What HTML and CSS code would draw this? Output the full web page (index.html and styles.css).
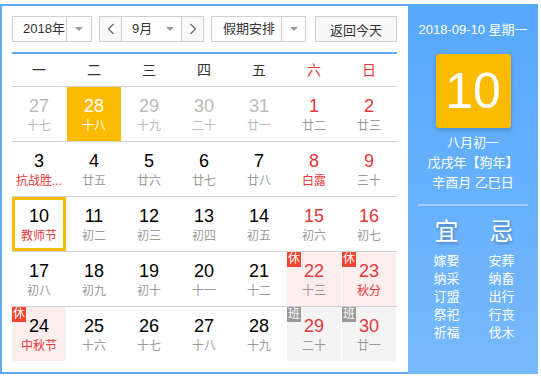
FILE: index.html
```html
<!DOCTYPE html>
<html lang="zh-CN">
<head>
<meta charset="utf-8">
<title>万年历</title>
<link rel="stylesheet" href="styles.css">
</head>
<body>
<div class="cal">
  <div class="main">
    <div class="toolbar">
      <div class="sel sel-year">
        <span class="sel-text">2018年</span>
        <span class="sel-arrow"><i class="tri"></i></span>
      </div>
      <div class="sel sel-month">
        <span class="nav"><svg width="8" height="12" viewBox="0 0 8 12"><polyline points="6.5,1 1.5,6 6.5,11" fill="none" stroke="#666" stroke-width="1.2"/></svg></span>
        <span class="month-mid"><span class="sel-text">9月</span><i class="tri"></i></span>
        <span class="nav nav-r"><svg width="8" height="12" viewBox="0 0 8 12"><polyline points="1.5,1 6.5,6 1.5,11" fill="none" stroke="#666" stroke-width="1.2"/></svg></span>
      </div>
      <div class="sel sel-holiday">
        <span class="sel-text">假期安排</span>
        <span class="sel-arrow"><i class="tri"></i></span>
      </div>
      <button class="today">返回今天</button>
    </div>
    <div class="head">
      <span>一</span><span>二</span><span>三</span><span>四</span><span>五</span><span class="red">六</span><span class="red">日</span>
    </div>
    <div class="week">
      <div class="day other"><b>27</b><em>十七</em></div>
      <div class="day cur"><b>28</b><em>十八</em></div>
      <div class="day other"><b>29</b><em>十九</em></div>
      <div class="day other"><b>30</b><em>二十</em></div>
      <div class="day other"><b>31</b><em>廿一</em></div>
      <div class="day wkend"><b>1</b><em>廿二</em></div>
      <div class="day wkend"><b>2</b><em>廿三</em></div>
    </div>
    <div class="week">
      <div class="day fest"><b>3</b><em>抗战胜...</em></div>
      <div class="day"><b>4</b><em>廿五</em></div>
      <div class="day"><b>5</b><em>廿六</em></div>
      <div class="day"><b>6</b><em>廿七</em></div>
      <div class="day"><b>7</b><em>廿八</em></div>
      <div class="day wkend fest"><b>8</b><em>白露</em></div>
      <div class="day wkend"><b>9</b><em>三十</em></div>
    </div>
    <div class="week">
      <div class="day picked fest"><b>10</b><em>教师节</em></div>
      <div class="day"><b>11</b><em>初二</em></div>
      <div class="day"><b>12</b><em>初三</em></div>
      <div class="day"><b>13</b><em>初四</em></div>
      <div class="day"><b>14</b><em>初五</em></div>
      <div class="day wkend"><b>15</b><em>初六</em></div>
      <div class="day wkend"><b>16</b><em>初七</em></div>
    </div>
    <div class="week">
      <div class="day"><b>17</b><em>初八</em></div>
      <div class="day"><b>18</b><em>初九</em></div>
      <div class="day"><b>19</b><em>初十</em></div>
      <div class="day"><b>20</b><em>十一</em></div>
      <div class="day"><b>21</b><em>十二</em></div>
      <div class="day wkend rest"><span class="badge">休</span><b>22</b><em>十三</em></div>
      <div class="day wkend rest fest"><span class="badge">休</span><b>23</b><em>秋分</em></div>
    </div>
    <div class="week">
      <div class="day rest fest"><span class="badge">休</span><b>24</b><em>中秋节</em></div>
      <div class="day"><b>25</b><em>十六</em></div>
      <div class="day"><b>26</b><em>十七</em></div>
      <div class="day"><b>27</b><em>十八</em></div>
      <div class="day"><b>28</b><em>十九</em></div>
      <div class="day wkend work"><span class="badge">班</span><b>29</b><em>二十</em></div>
      <div class="day wkend work"><span class="badge">班</span><b>30</b><em>廿一</em></div>
    </div>
  </div>
  <div class="side">
    <div class="side-date">2018-09-10 星期一</div>
    <div class="big-day">10</div>
    <div class="lunar">
      <div>八月初一</div>
      <div>戊戌年【狗年】</div>
      <div>辛酉月 乙巳日</div>
    </div>
    <div class="divider"></div>
    <div class="yiji">
      <div class="yj-col">
        <div class="yj-title">宜</div>
        <div>嫁娶</div><div>纳采</div><div>订盟</div><div>祭祀</div><div>祈福</div>
      </div>
      <div class="yj-col">
        <div class="yj-title">忌</div>
        <div>安葬</div><div>纳畜</div><div>出行</div><div>行丧</div><div>伐木</div>
      </div>
    </div>
  </div>
</div>
</body>
</html>
```

FILE: styles.css
```css
* { box-sizing: border-box; }
html, body { margin: 0; padding: 0; background: #fff; }
body {
  font-family: "Liberation Sans", "Noto Sans CJK SC", Arial, sans-serif;
  color: #333;
}
.cal {
  display: flex;
  margin-top: 4px;
  width: 538px;
  height: 370px;
}
.main {
  width: 408px;
  height: 370px;
  border: 2px solid #5eaaf8;
  border-right: none;
  padding: 10px 11px 0 10px;
}
.toolbar {
  display: flex;
  height: 26px;
  margin-bottom: 10px;
}
.sel {
  display: flex;
  height: 26px;
  border: 1px solid #cfcfcf;
  background: #fff;
  font-size: 13px;
  line-height: 24px;
  color: #333;
}
.sel-year { width: 80px; margin-right: 7px; }
.sel-year .sel-text { width: 54px; padding-left: 10px; border-right: 1px solid #cfcfcf; }
.sel-arrow { flex: 1; display: flex; align-items: center; justify-content: center; }
.tri {
  display: block;
  width: 0; height: 0;
  border-left: 4px solid transparent;
  border-right: 4px solid transparent;
  border-top: 4px solid #999;
}
.sel-month { width: 105px; margin-right: 7px; }
.nav {
  width: 22px;
  background: #f7f7f7;
  border-right: 1px solid #cfcfcf;
  display: flex; align-items: center; justify-content: center;
}
.nav-r { border-right: none; border-left: 1px solid #cfcfcf; }
.month-mid {
  flex: 1;
  display: flex;
  align-items: center;
  padding-left: 10px;
}
.month-mid .sel-text { flex: 1; }
.month-mid .tri { margin-right: 7px; }
.sel-holiday { width: 95px; margin-right: 9px; }
.sel-holiday .sel-text { width: 70px; padding-left: 11px; border-right: 1px solid #cfcfcf; }
.today {
  width: 82px;
  height: 26px;
  border: 1px solid #cfcfcf;
  background: #f7f7f7;
  font-family: inherit;
  font-size: 13px;
  color: #333;
  padding: 0;
  margin: 0;
}
.head {
  display: grid;
  grid-template-columns: repeat(7, 55px);
  height: 34px;
  border-top: 2px solid #5eaaf8;
  line-height: 32px;
  font-size: 14px;
  color: #333;
}
.head span { width: 54px; text-align: center; }
.red { color: #e6353b; }
.week {
  display: grid;
  grid-template-columns: repeat(7, 55px);
  height: 55px;
  border-top: 1px solid #d2d2d2;
}
.day {
  position: relative;
  width: 54px;
  height: 54px;
  padding-top: 9px;
  text-align: center;
}
.day b {
  display: block;
  font-weight: normal;
  font-size: 18px;
  line-height: 20px;
  color: #000;
}
.day em {
  display: block;
  font-style: normal;
  font-size: 12px;
  line-height: 16px;
  margin-top: 2px;
  color: #9a9a9a;
  white-space: nowrap;
}
.day.other b, .day.other em { color: #bbb; }
.day.wkend b { color: #e6353b; }
.day.fest em { color: #e6353b; }
.day.cur { background: #fdbb00; }
.day.cur b, .day.cur em { color: #fff; }
.day.picked { border: 3px solid #fdbb00; padding-top: 6px; }
.day.rest { background: #fdeeee; }
.day.work { background: #f4f4f4; }
.badge {
  position: absolute;
  top: 0; left: 0;
  width: 14px;
  height: 15px;
  font-size: 12px;
  line-height: 15px;
  color: #fff;
  text-align: center;
}
.rest .badge { background: #f6432e; }
.work .badge { background: #999; }
.side {
  width: 130px;
  height: 370px;
  background: linear-gradient(#56a8fc, #77b9fd);
  color: #fff;
  text-align: center;
  padding-top: 16px;
}
.side-date { font-size: 13px; line-height: 20px; }
.big-day {
  width: 75px;
  height: 74px;
  margin: 14px auto 0;
  background: #fdbb00;
  border-radius: 3px;
  box-shadow: 0 2px 5px rgba(0,0,0,0.2);
  font-size: 50px;
  line-height: 74px;
}
.lunar {
  margin-top: 5px;
  font-size: 13px;
  line-height: 20px;
}
.divider {
  height: 2px;
  margin: 11px 10px 0;
  background: rgba(255,255,255,0.35);
}
.yiji {
  display: flex;
  justify-content: center;
  margin-top: 11px;
  padding-left: 2px;
}
.yj-col {
  width: 55px;
  font-size: 13px;
  line-height: 18px;
}
.yj-title {
  font-size: 24px;
  line-height: 30px;
  margin-bottom: 5px;
  text-shadow: 1px 2px 3px rgba(0,0,0,0.3);
}
```
